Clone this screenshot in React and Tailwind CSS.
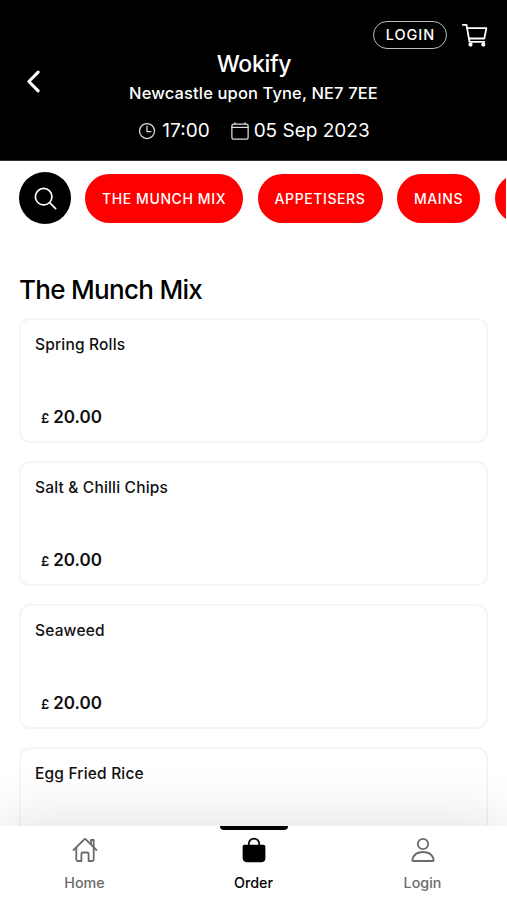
import React from 'react';
import {
  IoBag,
  IoCalendarClearOutline,
  IoChevronBack,
  IoSearchOutline,
  IoTimeOutline,
} from 'react-icons/io5';

const iconProps = {
  viewBox: '0 0 28 28',
  fill: 'none',
  stroke: 'currentColor',
  strokeWidth: 1.8,
  strokeLinecap: 'round',
  strokeLinejoin: 'round',
};

const HomeIcon = ({ className }) => (
  <svg {...iconProps} className={className}>
    <path d="M2.6 14 13.3 3.4a1.1 1.1 0 0 1 1.5 0L25.4 14" />
    <path d="M20 8.2V4h2.7v7" />
    <path d="M5.3 11.7v11.8c0 .9.6 1.5 1.5 1.5h3.6v-7c0-.9.6-1.5 1.5-1.5h4.2c.9 0 1.500.6 1.500 1.500v7h3.600c.9 0 1.500-.6 1.500-1.500V11.700" />
  </svg>
);

const PersonIcon = ({ className }) => (
  <svg {...iconProps} className={className}>
    <circle cx="14" cy="8" r="5.2" />
    <path d="M4.3 25h19.4c.8 0 1.200-.6 1-1.300C23.500 18.800 19.600 16 14 16S4.500 18.800 3.300 23.700c-.2.7.2 1.300 1 1.300Z" />
  </svg>
);

const CartIcon = ({ className }) => (
  <svg {...iconProps} className={className}>
    <path d="M1.8 3.8h3.7l3 17.1h14.8" />
    <path d="M6.2 7.100h19.200l-2.100 10.400H8" />
    <circle cx="9.500" cy="23.600" r="1.200" fill="currentColor" />
    <circle cx="22.300" cy="23.600" r="1.200" fill="currentColor" />
  </svg>
);

const categories = [
  { name: 'The Munch Mix', width: 'w-[158px]' },
  { name: 'Appetisers', width: 'w-[125px]' },
  { name: 'Mains', width: 'w-[83px]' },
  { name: '', width: 'w-[100px]' },
];

const dishes = [
  { name: 'Spring Rolls', price: '20.00' },
  { name: 'Salt & Chilli Chips', price: '20.00' },
  { name: 'Seaweed', price: '20.00' },
  { name: 'Egg Fried Rice' },
];

const tabs = [
  { label: 'Home', icon: HomeIcon },
  { label: 'Order', icon: IoBag, active: true },
  { label: 'Login', icon: PersonIcon },
];

const Header = () => (
  <header className="relative h-[161px] shrink-0 border-b border-[#333] bg-black text-white">
    <div className="flex h-[49px] items-end justify-end gap-[14px] pr-[18px]">
      <button className="flex h-7 w-[74px] items-center justify-center rounded-full border-[1.5px] border-[#bbb] pl-px text-[14.5px] font-medium tracking-[0.95px]">
        LOGIN
      </button>
      <CartIcon className="size-7" />
    </div>
    <div className="flex flex-col items-center">
      <h1 className="pl-px text-[23px] leading-[30px] font-medium tracking-[-0.3px]">Wokify</h1>
      <p className="mt-[3px] text-[16.5px] leading-[22px] font-medium tracking-[0.13px]">Newcastle upon Tyne, NE7 7EE</p>
      <div className="mt-[15px] flex h-[24px] items-center text-[19px] leading-[24px]">
        <IoTimeOutline className="mr-[5px] size-[20px] text-[#ddd]" />
        <span>17:00</span>
        <IoCalendarClearOutline className="mr-[4px] ml-[20px] size-[20px] text-[#ddd]" />
        <span>05 Sep 2023</span>
      </div>
    </div>
    <button className="absolute top-[65px] left-[17px]" aria-label="Back">
      <IoChevronBack className="size-[33px]" stroke="currentColor" strokeWidth="12" />
    </button>
  </header>
);

const CategoryBar = () => (
  <div className="mr-px -mt-px flex shrink-0 items-center gap-[14px] overflow-hidden pt-[12px] pl-[19px]">
    <button className="flex size-[52px] shrink-0 items-center justify-center rounded-full bg-black text-white" aria-label="Search">
      <IoSearchOutline className="size-[27px]" />
    </button>
    <div className="flex gap-[14.5px]">
      {categories.map(({ name, width }) => (
        <button
          key={name}
          className={`${width} h-[49px] shrink-0 rounded-full bg-[#ff0000] text-center text-[14px] font-medium tracking-[0.6px] text-white uppercase`}
        >
          {name}
        </button>
      ))}
    </div>
  </div>
);

const DishCard = ({ name, price }) => (
  <article className="h-[125px] shrink-0 rounded-[11px] border-2 border-[#f5f5f5] px-[14px] pt-[14px] text-[#111]">
    <h3 className="text-[15.5px] leading-[22px] font-medium tracking-[0.18px]">{name}</h3>
    {price && (
      <p className="mt-[49px] flex items-baseline gap-[4px] pl-[6px] leading-[24px]">
        <span className="text-[13px] font-semibold">£</span>
        <span className="text-[17px] font-semibold">{price}</span>
      </p>
    )}
  </article>
);

const TabBar = () => (
  <nav className="relative grid h-[74px] shrink-0 grid-cols-3 bg-white shadow-[0_-5px_60px_rgba(0,0,0,0.12)]">
    {tabs.map(({ label, icon: Icon, active }) => (
      <button
        key={label}
        className={`flex flex-col items-center ${active ? 'text-black' : 'text-[#6b6b6b]'}`}
      >
        <span className={`h-[4px] w-[68px] rounded-b-[4px] ${active ? 'bg-black' : ''}`} />
        <Icon className="mt-[6px] size-[28px]" />
        <span className="mt-[9px] text-[14.3px] leading-[20px] font-medium">{label}</span>
      </button>
    ))}
  </nav>
);

export default function App() {
  return (
    <div className="flex h-[900px] w-[507px] flex-col overflow-hidden bg-white font-['Inter','Liberation_Sans',sans-serif]">
      <Header />
      <CategoryBar />
      <main className="flex min-h-0 flex-1 flex-col overflow-hidden px-[19px] pt-[48px]">
        <h2 className="shrink-0 text-[26px] leading-[36px] font-medium tracking-[-0.7px] text-black">The Munch Mix</h2>
        <div className="mt-[10px] flex flex-col gap-[18px]">
          {dishes.map((dish) => (
            <DishCard key={dish.name} {...dish} />
          ))}
        </div>
      </main>
      <TabBar />
    </div>
  );
}
